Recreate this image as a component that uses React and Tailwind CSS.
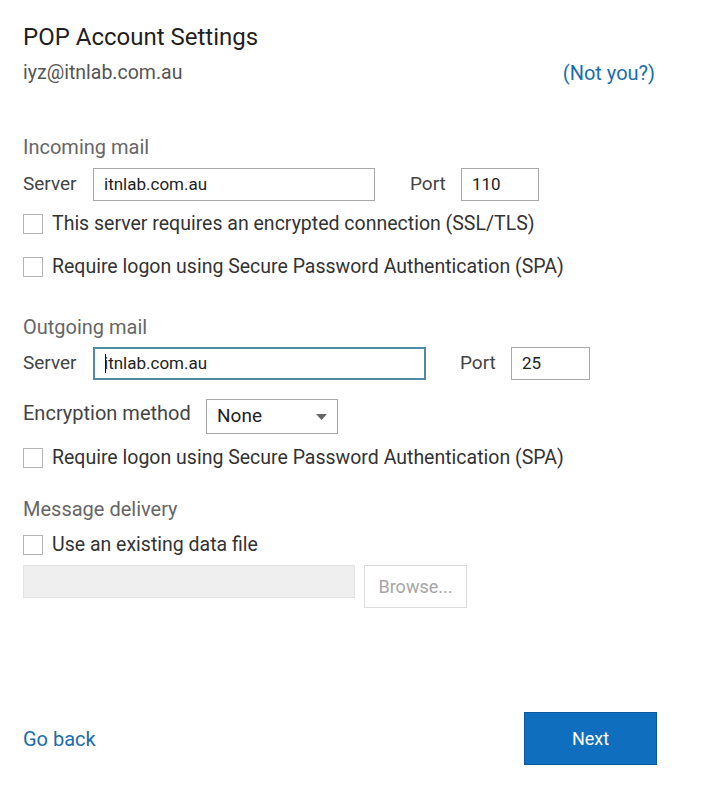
import React from 'react'

const font = { fontFamily: 'Roboto, "Liberation Sans", sans-serif' }

const Checkbox = ({ label }) => (
  <div className="flex items-center h-6">
    <div className="w-5 h-5 border border-[#b4b4b4] bg-white shrink-0" />
    <span className="ml-[9px] text-[19.5px] text-[#333] leading-6">{label}</span>
  </div>
)

const Field = ({ w, children, focused }) => (
  <div
    className={`h-[33px] flex items-center pl-[10px] text-[17px] text-[#222] bg-white ${w} ${
      focused ? 'border-2 border-[#4f8ba2] pl-[9px]' : 'border border-[#a8a8a8]'
    }`}
  >
    {children}
  </div>
)

const App = () => {
  return (
    <div className="w-[704px] h-[800px] bg-white flex flex-col pl-[23px] pr-[47px] pt-[22px] pb-[35px]" style={font}>
      {/* Header */}
      <h1 className="text-[24px] leading-[30px] text-[#1f1f1f]">POP Account Settings</h1>
      <div className="flex justify-between items-center h-6 mt-[9px] pr-[2px]">
        <span className="text-[19.5px] text-[#555]">iyz@itnlab.com.au</span>
        <span className="text-[20px] text-[#1b6dab]">(Not you?)</span>
      </div>

      {/* Incoming */}
      <div className="mt-[50px] text-[20px] leading-6 text-[#666]">Incoming mail</div>
      <div className="flex items-center mt-[9px]">
        <span className="w-[70px] text-[19px] text-[#444]">Server</span>
        <Field w="w-[282px]">itnlab.com.au</Field>
        <span className="ml-[35px] w-[51px] text-[19px] text-[#444]">Port</span>
        <Field w="w-[78px]">110</Field>
      </div>
      <div className="mt-[11px]">
        <Checkbox label="This server requires an encrypted connection (SSL/TLS)" />
      </div>
      <div className="mt-[19px]">
        <Checkbox label="Require logon using Secure Password Authentication (SPA)" />
      </div>

      {/* Outgoing */}
      <div className="mt-[36px] text-[20px] leading-6 text-[#666]">Outgoing mail</div>
      <div className="flex items-center mt-[8px]">
        <span className="w-[70px] text-[19px] text-[#444]">Server</span>
        <Field w="w-[333px]" focused>
          <span className="inline-block w-px h-[19px] bg-black -mr-[2px]" />
          itnlab.com.au
        </Field>
        <span className="ml-[34px] w-[51px] text-[19px] text-[#444]">Port</span>
        <Field w="w-[79px]">25</Field>
      </div>
      <div className="flex items-start mt-[19px]">
        <span className="w-[183px] pt-[2px] text-[20px] leading-6 text-[#444]">Encryption method</span>
        <div className="w-[132px] h-[35px] border border-[#a8a8a8] flex items-center justify-between pl-[10px] pr-[10px]">
          <span className="text-[19px] text-[#222]">None</span>
          <svg width="11" height="6" viewBox="0 0 11 6">
            <path d="M0 0h11L5.5 6z" fill="#666" />
          </svg>
        </div>
      </div>
      <div className="mt-[12px]">
        <Checkbox label="Require logon using Secure Password Authentication (SPA)" />
      </div>

      {/* Message delivery */}
      <div className="mt-[27px] text-[20px] leading-6 text-[#666]">Message delivery</div>
      <div className="mt-[12px]">
        <Checkbox label="Use an existing data file" />
      </div>
      <div className="flex items-start mt-[8px]">
        <div className="w-[332px] h-[33px] bg-[#efefef] border border-[#e2e2e2]" />
        <div className="ml-[9px] w-[103px] h-[43px] border border-[#dcdcdc] flex items-center justify-center text-[18px] text-[#a6a6a6]">
          Browse...
        </div>
      </div>

      {/* Footer */}
      <div className="mt-auto flex items-center justify-between">
        <span className="text-[20px] text-[#1b6dab]">Go back</span>
        <button className="w-[133px] h-[53px] bg-[#106ebe] border border-[#0b5a9e] text-white text-[18px]">
          Next
        </button>
      </div>
    </div>
  )
}

export default App
